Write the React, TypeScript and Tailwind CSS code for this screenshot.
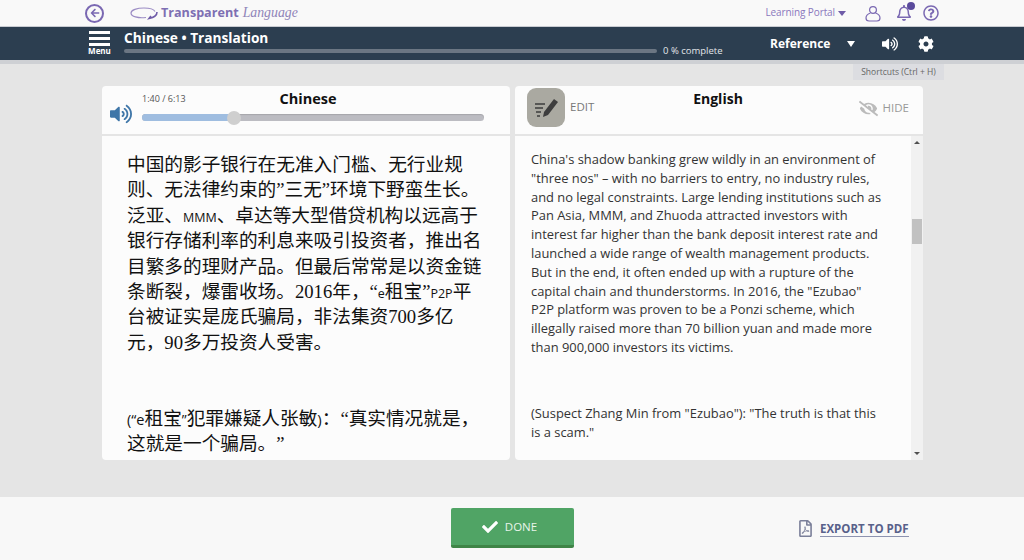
import { FaArrowLeft, FaCheck, FaCog, FaEyeSlash, FaRegBell, FaRegFilePdf, FaRegQuestionCircle, FaVolumeUp } from "react-icons/fa";

const SANS = "font-['Open_Sans','Noto_Sans_CJK_SC',sans-serif]";

function Logo() {
  return (
    <div className="flex items-center gap-[3px]">
      <svg width="28" height="14" viewBox="0 0 28 14" fill="none" stroke="#9b8cc4" strokeWidth="1.2">
        <path d="M16 11.5C8 12.5 1 10.5 1 7 1 4 7 2 14 2c6 0 10 1.5 11 3.5" />
        <path d="M27 6c0 3-3 5.5-8 6.5l2-2.5" stroke="#6f5ca8" strokeWidth="1.6" />
      </svg>
      <span className="text-[12.6px] font-bold text-[#7e6fb3]">Transparent</span>
      <span className="ml-[1px] font-['Liberation_Serif',serif] text-[13.8px] italic text-[#8f84b8]">Language</span>
    </div>
  );
}

function TopBar() {
  return (
    <div className="flex h-[26px] items-center bg-[#f9f9f9] pl-[85px] pr-[85px]">
      <div className="flex h-[19px] w-[19px] items-center justify-center rounded-full border-2 border-[#7a68b2]">
        <FaArrowLeft size={10} color="#7a68b2" />
      </div>
      <div className="ml-[26px]">
        <Logo />
      </div>
      <div className="ml-auto flex items-center text-[#8a78bd]">
        <span className="-mt-[2px] text-[10px] tracking-[-0.1px]">Learning Portal</span>
        <svg width="8" height="5" viewBox="0 0 8 5" className="ml-[3px]" fill="#6f5ca8">
          <path d="M0 0h8L4 5z" />
        </svg>
        <svg width="16" height="17" viewBox="0 0 16 17" fill="none" stroke="#7a68b2" strokeWidth="1.2" className="ml-[19px]">
          <circle cx="8" cy="5" r="3.4" />
          <path d="M5.5 8C3 8.8 1 10.5 1 13c0 2 1 3 3 3h8c2 0 3-1 3-3 0-2.5-2-4.2-4.5-5" />
        </svg>
        <div className="relative ml-[15px]">
          <FaRegBell size={16} color="#7a68b2" />
          <span className="absolute -right-[3px] -top-[3px] h-[8px] w-[8px] rounded-full bg-[#5a4a9c]" />
        </div>
        <FaRegQuestionCircle size={16} className="ml-[11px]" color="#7a68b2" />
      </div>
    </div>
  );
}

function NavBar() {
  return (
    <div className="flex h-[34px] border-t border-[#c9ccd2] bg-[#2c3e50] pl-[88px] pr-[88px] text-white">
      <div className="flex w-[23px] flex-col items-center pt-[4px]">
        <div className="h-[3px] w-[21px] bg-white" />
        <div className="mt-[3px] h-[3px] w-[21px] bg-white" />
        <div className="mt-[3px] h-[3px] w-[21px] bg-white" />
        <span className="text-[8px] font-bold leading-[10px]">Menu</span>
      </div>
      <div className="ml-[13px] w-[610px] whitespace-nowrap pt-[1px]">
        <div className="text-[13.7px] font-bold leading-[19px]">Chinese • Translation</div>
        <div className="-mt-[2px] flex items-center">
          <div className="h-[4px] w-[533px] rounded-full bg-[#6b7683]" />
          <span className="ml-[6px] text-[9.5px] leading-[12px] text-[#e2e5e9]">0 % complete</span>
        </div>
      </div>
      <div className="ml-[36px] flex items-center">
        <span className="text-[12px] font-bold">Reference</span>
        <svg width="8" height="6" viewBox="0 0 8 6" className="ml-[17px]" fill="#fff">
          <path d="M0 0h8L4 6z" />
        </svg>
        <FaVolumeUp size={16} className="ml-[27px]" />
        <FaCog size={16} className="ml-[20px]" />
      </div>
    </div>
  );
}

function ChineseCard() {
  const s = `${SANS} text-[12.5px] leading-[0]`;
  return (
    <div className="w-[408px] rounded-[4px] bg-[#fcfcfc]">
      <div className="flex h-[50px] border-b-2 border-[#e5e5e5] pl-[8px]">
        <FaVolumeUp size={22} color="#3f76a8" className="mt-[17px]" />
        <div className="relative ml-[10px] w-[342px] pt-[7px]">
          <div className="text-[9px] leading-[12px] text-[#555]">1:40 / 6:13</div>
          <div className="absolute left-[116px] top-[2px] w-[100px] text-center text-[14.5px] font-bold text-[#111]">Chinese</div>
          <div className="mt-[9px] h-[7px] rounded-full bg-[#bcbcc2] shadow-[inset_0_1px_1px_rgba(0,0,0,0.12)]">
            <div className="relative h-[7px] w-[92px] rounded-l-full bg-[#9fbde0]">
              <span className="absolute -right-[7px] -top-[3.5px] h-[14px] w-[14px] rounded-full bg-[#cfcfcf]" />
            </div>
          </div>
        </div>
      </div>
      <div className="h-[324px] overflow-hidden pl-[25px] pr-[25px] pt-[16px] font-['Liberation_Serif','Noto_Sans_CJK_SC',serif] text-[18.67px] leading-[25.4px] text-[#111] [text-spacing-trim:space-all]">
        <p>
          中国的影子银行在无准入门槛、无行业规则、无法律约束的”三无”环境下野蛮生长。泛亚、<span className={s}>MMM</span>、卓达等大型借贷机构以远高于银行存储利率的利息来吸引投资者，推出名目繁多的理财产品。但最后常常是以资金链条断裂，爆雷收场。2016年，“<span className={s}>e</span>租宝”<span className={s}>P2P</span>平台被证实是庞氏骗局，非法集资700多亿元，90多万投资人受害。
        </p>
        <p className="mt-[50.8px]">
          <span className={`${SANS} text-[14.5px] leading-[0]`}>(“e</span>租宝<span className={`${SANS} text-[14px] leading-[0]`}>”</span>犯罪嫌疑人张敏<span className={`${SANS} text-[15px] leading-[0]`}>)</span>：“真实情况就是，这就是一个骗局。”
        </p>
      </div>
    </div>
  );
}

function EnglishCard() {
  return (
    <div className="ml-[5px] w-[408px] rounded-[4px] bg-[#fcfcfc]">
      <div className="relative flex h-[50px] border-b-2 border-[#e5e5e5] pl-[12px]">
        <div className="mt-[2px] flex h-[39px] w-[38px] items-center justify-center rounded-[9px] bg-[#aaa9a1]">
          <svg width="26" height="26" viewBox="0 0 26 26" fill="none" stroke="#3d3d3d">
            <path d="M2 9h10M2 13h8M3 17h5M4 21h3" strokeWidth="1.6" />
            <path d="M10 22l1-5L21 4l4 3-10 13z" fill="#3d3d3d" stroke="none" />
          </svg>
        </div>
        <span className="ml-[5px] mt-[13px] text-[11.5px] leading-[16px] text-[#777]">EDIT</span>
        <div className="absolute left-[153px] top-[2px] w-[100px] text-center text-[14px] font-bold text-[#111]">English</div>
        <div className="ml-auto mr-[14px] mt-[14px] flex h-[16px] items-center text-[11.5px] text-[#999]">
          <FaEyeSlash size={19} color="#bbb" />
          <span className="ml-[5px]">HIDE</span>
        </div>
      </div>
      <div className="flex h-[324px]">
        <div className="flex-1 overflow-hidden pl-[16px] pr-[24px] pt-[14px] text-[12.9px] leading-[18.8px] text-[#333]">
          <p>
            China's shadow banking grew wildly in an environment of "three nos" – with no barriers to entry, no industry rules, and no legal constraints. Large lending institutions such as Pan Asia, MMM, and Zhuoda attracted investors with interest far higher than the bank deposit interest rate and launched a wide range of wealth management products. But in the end, it often ended up with a rupture of the capital chain and thunderstorms. In 2016, the "Ezubao" P2P platform was proven to be a Ponzi scheme, which illegally raised more than 70 billion yuan and made more than 900,000 investors its victims.
          </p>
          <p className="mt-[47.6px]">(Suspect Zhang Min from "Ezubao"): "The truth is that this is a scam."</p>
        </div>
        <div className="flex w-[12px] flex-col items-center bg-[#f1f1f1]">
          <svg width="6" height="3" viewBox="0 0 6 3" className="mt-[5px]" fill="#505050">
            <path d="M0 3h6L3 0z" />
          </svg>
          <div className="mt-[75px] h-[25px] w-[10px] bg-[#c1c1c1]" />
          <svg width="6" height="3" viewBox="0 0 6 3" className="mb-[5px] mt-auto" fill="#505050">
            <path d="M0 0h6L3 3z" />
          </svg>
        </div>
      </div>
    </div>
  );
}

export default function App() {
  return (
    <div className={`${SANS} flex h-[560px] w-[1024px] flex-col overflow-hidden bg-[#e5e5e5]`}>
      <TopBar />
      <NavBar />
      <div className="h-[4px] bg-[#ced0d4]" />
      <div className="flex h-[16px] justify-end pr-[80px]">
        <div className="flex h-[16px] w-[91px] items-center justify-center bg-[#dcdde1] text-[8.5px] text-[#666]">Shortcuts (Ctrl + H)</div>
      </div>
      <div className="flex pl-[102px] pt-[6px]">
        <ChineseCard />
        <EnglishCard />
      </div>
      <div className="mt-[37px] flex flex-1 items-start bg-[#f8f8f8]">
        <div className="ml-[451px] mt-[11px] flex h-[40px] w-[123px] items-center justify-center rounded-[2px] border-b-[3px] border-[#3f8547] bg-[#50a465] pr-[6px] text-[11.5px] text-[#e9f5ea]">
          <FaCheck size={16} color="#fff" />
          <span className="ml-[7px]">DONE</span>
        </div>
        <div className="ml-[223px] mt-[23px] flex items-center">
          <FaRegFilePdf size={17} color="#7a7f99" />
          <span className="ml-[6px] border-b border-[#8d93b0] text-[11.5px] font-bold leading-[15px] text-[#58618a]">EXPORT TO PDF</span>
        </div>
      </div>
    </div>
  );
}
